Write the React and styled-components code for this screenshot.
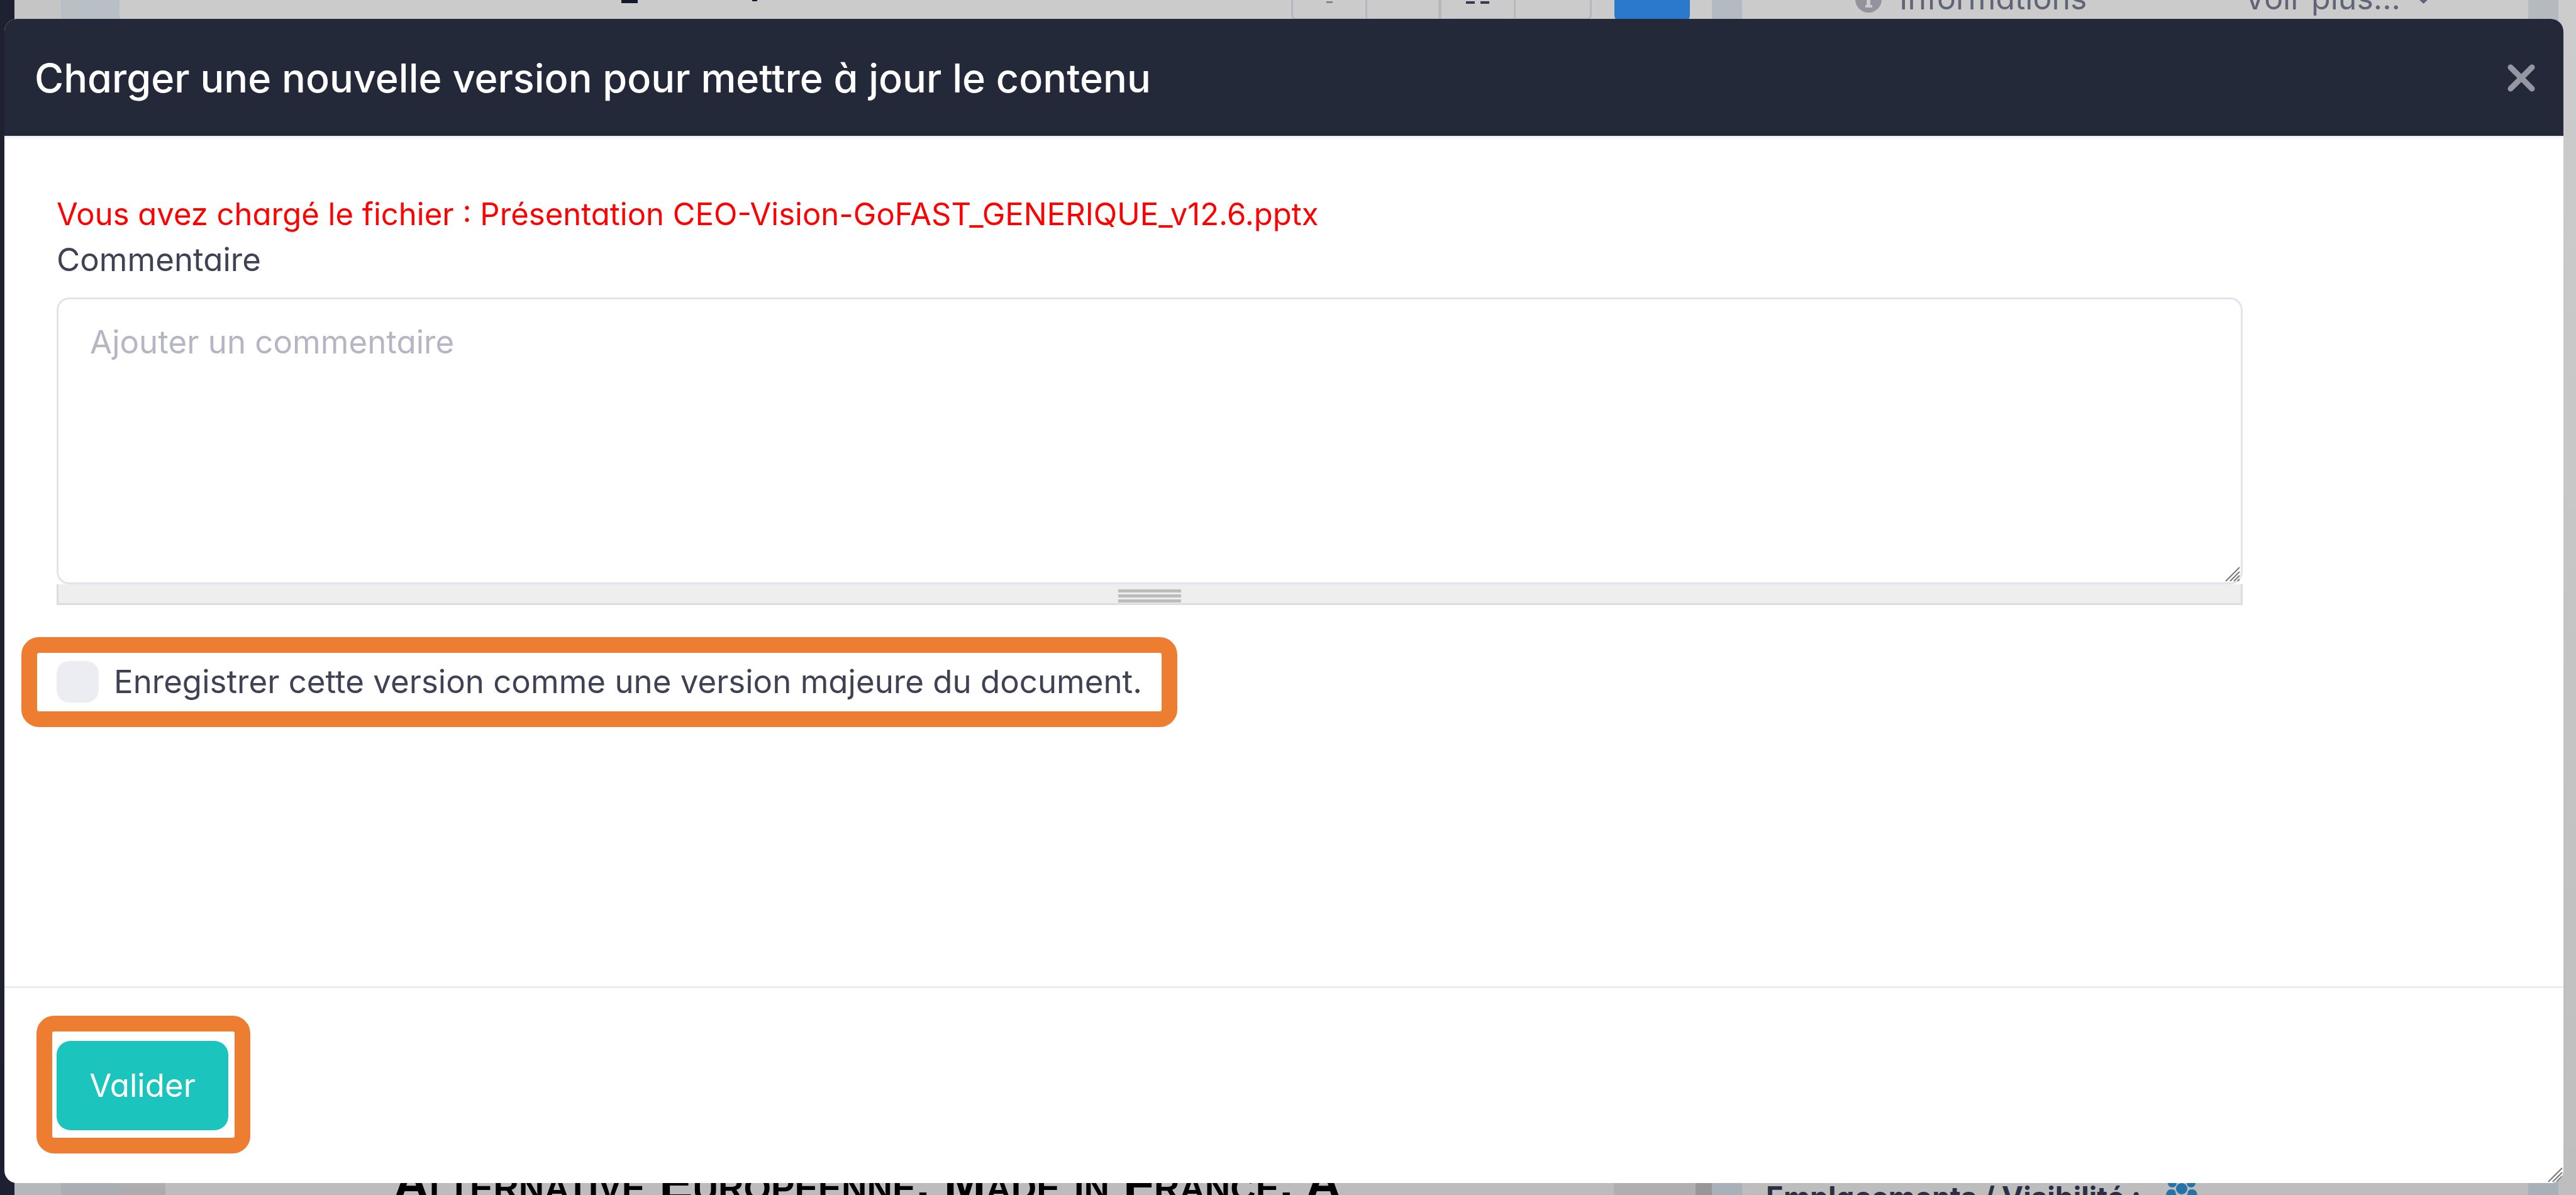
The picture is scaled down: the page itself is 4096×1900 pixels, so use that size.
import React from "react";
import styled, { createGlobalStyle } from "styled-components";

const GlobalStyle = createGlobalStyle`
  * { box-sizing: border-box; }
  html, body, #root { height: 100%; }
  body {
    margin: 0;
    overflow: hidden;
    background: #c6c6c6;
    color: #3f4254;
    font-family: Inter, "Noto Sans", sans-serif;
    font-feature-settings: "cv11";
    font-size: 51px;
    line-height: 72px;
  }
  button, textarea, input { font: inherit; font-feature-settings: inherit; }
`;

/* ---------- page behind the dialog ---------- */

const Page = styled.div`
  display: flex;
  height: 100vh;
  overflow: hidden;
`;

const Band = styled.div`
  flex: 0 0 ${(p) => p.$width}px;
  background: linear-gradient(${(p) => p.$top}, ${(p) => p.$bottom});
`;

const Column = styled.div`
  display: flex;
  flex-direction: column;
  justify-content: space-between;
  flex: ${(p) => p.$grow} 1 0;
  min-width: 0;
  background: #cbcbcb;
`;

const TopStrip = styled.div`
  display: flex;
  align-items: flex-end;
  height: 30px;
  padding: 0 ${(p) => p.$right}px 0 ${(p) => p.$left}px;
  overflow: hidden;
`;

const FileTitle = styled.div`
  display: flex;
  align-self: flex-start;
  gap: 182px;
  margin: 0 auto 0 798px;
`;

const Stroke = styled.span`
  width: ${(p) => p.$width}px;
  height: ${(p) => p.$height}px;
  background: ${(p) => p.$color || "#14182c"};
`;

const ToolGroup = styled.div`
  display: flex;
  height: 60px;
  margin: 0 36px -2px 0;
  border: 3px solid #b7b7c0;
  border-radius: 8px;
`;

const ToolButton = styled.button`
  display: flex;
  justify-content: center;
  align-items: flex-start;
  gap: 9px;
  width: 118px;
  padding: 27px 0 0;
  border: 0;
  border-right: ${(p) => p.$line}px solid #b7b7c0;
  background: none;
`;

const PrimaryTool = styled.button`
  width: 120px;
  height: 60px;
  margin-bottom: -6px;
  border: 0;
  border-radius: 12px;
  background: #2b79cc;
`;

const PanelTab = styled.a`
  display: flex;
  align-items: flex-end;
  gap: ${(p) => p.$gap}px;
  height: 60px;
  color: #626379;
  font-size: 50px;
  line-height: 66px;
  text-decoration: none;
  white-space: nowrap;
`;

const PanelSpacer = styled.span`
  flex: 1;
`;

const InfoIcon = styled.svg`
  width: 42px;
  height: 42px;
  margin-bottom: 10px;
`;

const CaretIcon = styled.svg`
  width: 17px;
  height: 10px;
  margin-bottom: 22px;
`;

const BottomStrip = styled.div`
  display: flex;
  height: 20px;
  overflow: hidden;
  background: #bdbdbd;
`;

const Slide = styled.div`
  flex: 1;
  padding-left: 362px;
  color: #000;
  background: #bcbcbc;
  font-family: "Liberation Sans", Arial, sans-serif;
  font-size: 80px;
  font-weight: 700;
  font-variant: small-caps;
  line-height: 2px;
  white-space: nowrap;
`;

const PanelHeading = styled.div`
  display: flex;
  align-items: flex-start;
  gap: 40px;
  padding-left: 38px;
  color: #2c2e43;
  font-size: 46px;
  font-weight: 700;
  line-height: 46px;
  white-space: nowrap;
`;

const UsersIcon = styled.svg`
  flex: none;
  width: 50px;
  height: 40px;
`;

/* ---------- dialog ---------- */

const Overlay = styled.div`
  position: fixed;
  inset: 0;
  display: flex;
  padding: 30px 20px 19px 7px;
`;

const Dialog = styled.section`
  position: relative;
  display: flex;
  flex-direction: column;
  flex: 1;
  overflow: hidden;
  border-radius: 20px;
  background: #fff;
`;

const DialogHeader = styled.header`
  display: flex;
  align-items: center;
  justify-content: space-between;
  height: 189px;
  padding: 2px 44px 0 48px;
  border-bottom: 3px solid #eff1f6;
  background: #242939;
  background-clip: padding-box;
`;

const DialogTitle = styled.h1`
  margin: 0;
  color: #fff;
  font-size: 63px;
  font-weight: 500;
  line-height: 80px;
`;

const CloseButton = styled.button`
  display: flex;
  padding: 0;
  border: 0;
  background: none;
  color: #9496a1;
`;

const DialogBody = styled.div`
  flex: 1;
  padding: 86px 83px 0;
`;

const LoadedFile = styled.p`
  margin: 0;
  color: #f00;
  font-size: 49px;
`;

const Field = styled.div`
  width: calc(100% - 427px);
`;

const FieldLabel = styled.label`
  display: block;
  margin-bottom: 24px;
`;

const CommentShell = styled.div`
  position: relative;
  display: flex;
`;

const CommentBox = styled.textarea`
  width: 100%;
  height: 456px;
  padding: 32px 50px;
  border: 3px solid #e1e4ef;
  border-radius: 20px;
  outline: 0;
  background: #fff;
  color: #3f4254;
  resize: none;
  &::placeholder { color: #b5b5c3; opacity: 1; }
`;

const ResizeIcon = styled.svg`
  position: absolute;
  right: ${(p) => p.$inset}px;
  bottom: ${(p) => p.$inset}px;
  width: ${(p) => p.$size}px;
  height: ${(p) => p.$size}px;
`;

const Grippie = styled.div`
  display: flex;
  flex-direction: column;
  align-items: center;
  gap: 3px;
  height: 33px;
  padding-top: 8px;
  border: solid #ddd;
  border-width: 0 3px 3px;
  background: #eee;
`;

const GripLine = styled.span`
  width: 100px;
  height: 5px;
  background: #bcbcbc;
`;

const Highlight = styled.div`
  position: relative;
  width: fit-content;
  margin-top: ${(p) => p.$top}px;
  &::after {
    content: "";
    position: absolute;
    inset: ${(p) => p.$inset};
    border: 25px solid #ed7d31;
    border-radius: 28px;
    pointer-events: none;
  }
`;

const CheckLabel = styled.label`
  display: flex;
  align-items: center;
  gap: 24px;
  height: 66px;
  white-space: nowrap;
`;

const CheckInput = styled.input`
  appearance: none;
  width: 67px;
  height: 66px;
  margin: 0;
  border-radius: 20px;
  background: #ebedf3;
`;

const DialogFooter = styled.footer`
  height: 313px;
  padding: 0 83px;
  border-top: 3px solid #ebedf3;
`;

const SubmitButton = styled.button`
  display: block;
  width: 273px;
  height: 142px;
  padding: 0;
  border: 0;
  border-radius: 22px;
  background: #1bc5bd;
  color: #fff;
`;

function Resizer({ size, inset }) {
  return (
    <ResizeIcon $size={size} $inset={inset} viewBox="0 0 24 24" aria-hidden="true">
      <path d="M1 23 23 1M8 23 23 8M14 23 23 14M20 23 23 20" stroke="#777" strokeWidth="2" />
    </ResizeIcon>
  );
}

function Background() {
  return (
    <Page>
      <Band $width={23} $top="#1e2230" $bottom="#1c2030" />
      <Band $width={74} $top="#c5c5c5" $bottom="#b5b8ba" />
      <Band $width={93} $top="#b8bfc5" $bottom="#a9aeb3" />
      <Column $grow={2532}>
        <TopStrip $left={0} $right={35}>
          <FileTitle>
            <Stroke $width={26} $height={5} />
            <Stroke $width={8} $height={2} />
          </FileTitle>
          <ToolGroup>
            <ToolButton $line={3} aria-label="Commentaires">
              <Stroke $width={10} $height={3} $color="#85858f" />
            </ToolButton>
            <ToolButton $line={5} aria-label="Options" />
            <ToolButton $line={3} aria-label="Affichage">
              <Stroke $width={14} $height={4} $color="#3a3850" />
              <Stroke $width={14} $height={4} $color="#3a3850" />
            </ToolButton>
            <ToolButton $line={0} aria-label="Plus" />
          </ToolGroup>
          <PrimaryTool aria-label="Ajouter" />
        </TopStrip>
        <BottomStrip>
          <Band $width={73} $top="#afaeb0" $bottom="#abaaac" />
          <Slide>Alternative Européenne, Made in France, A</Slide>
          <Band $width={130} $top="#afaeb0" $bottom="#afaeb0" />
          <Band $width={26} $top="#979797" $bottom="#979797" />
        </BottomStrip>
      </Column>
      <Band $width={48} $top="#b4bac1" $bottom="#a8b0b9" />
      <Column $grow={1250}>
        <TopStrip $left={180} $right={158}>
          <PanelTab href="#informations" $gap={28}>
            <InfoIcon viewBox="0 0 42 42" aria-hidden="true">
              <circle cx="21" cy="21" r="21" fill="#93929d" />
              <path d="M17 17h7v13h3v4H16v-4h2v-9h-1z" fill="#cbcbcb" />
            </InfoIcon>
            Informations
          </PanelTab>
          <PanelSpacer />
          <PanelTab href="#plus" $gap={28}>
            Voir plus...
            <CaretIcon viewBox="0 0 17 10" aria-hidden="true">
              <path d="M0 0h17L8.500 8z" fill="#626379" />
            </CaretIcon>
          </PanelTab>
        </TopStrip>
        <BottomStrip>
          <PanelHeading>
            Emplacements / Visibilité :
            <UsersIcon viewBox="0 0 50 40" aria-hidden="true">
              <g fill="#2473a8">
                <circle cx="10" cy="1" r="7" />
                <circle cx="40" cy="1" r="7" />
                <circle cx="25" cy="10" r="9" />
                <path d="M0 22q0-11 9-11 4 0 6 3 0 6 4 8h-19zM50 22q0-11-9-11-4 0-6 3 0 6-4 8h19zM9 40q0-18 16-18t16 18z" />
              </g>
            </UsersIcon>
          </PanelHeading>
        </BottomStrip>
      </Column>
      <Band $width={48} $top="#b4bac0" $bottom="#a8b0b9" />
      <Band $width={28} $top="#cccccc" $bottom="#bebebe" />
    </Page>
  );
}

export default function App() {
  return (
    <>
      <GlobalStyle />
      <Background />
      <Overlay>
        <Dialog role="dialog" aria-labelledby="dialog-title">
          <DialogHeader>
            <DialogTitle id="dialog-title">Charger une nouvelle version pour mettre à jour le contenu</DialogTitle>
            <CloseButton aria-label="Fermer">
              <svg width="46" height="46" viewBox="0 0 46 46" aria-hidden="true">
                <path d="M6 6 40 40M40 6 6 40" stroke="currentColor" strokeWidth="9" strokeLinecap="round" />
              </svg>
            </CloseButton>
          </DialogHeader>
          <DialogBody>
            <LoadedFile>Vous avez chargé le fichier : Présentation CEO-Vision-GoFAST_GENERIQUE_v12.6.pptx</LoadedFile>
            <Field>
              <FieldLabel htmlFor="comment">Commentaire</FieldLabel>
              <CommentShell>
                <CommentBox id="comment" placeholder="Ajouter un commentaire" />
                <Resizer size={24} inset={4} />
              </CommentShell>
              <Grippie>
                <GripLine />
                <GripLine />
                <GripLine />
              </Grippie>
            </Field>
            <Highlight $top={89} $inset="-38px -56px -39px -56px">
              <CheckLabel>
                <CheckInput type="checkbox" />
                Enregistrer cette version comme une version majeure du document.
              </CheckLabel>
            </Highlight>
          </DialogBody>
          <DialogFooter>
            <Highlight $top={84} $inset="-40px -35px -37px -32px">
              <SubmitButton type="submit">Valider</SubmitButton>
            </Highlight>
          </DialogFooter>
          <Resizer size={24} inset={1} />
        </Dialog>
      </Overlay>
    </>
  );
}
